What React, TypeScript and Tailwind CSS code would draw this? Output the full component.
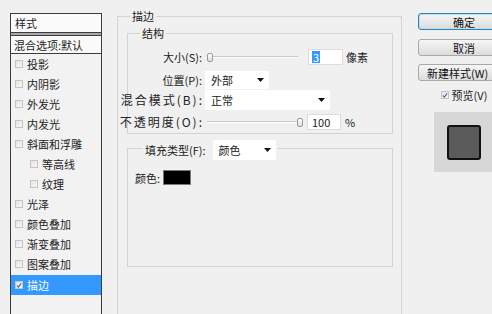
import React from "react";

const font = { fontFamily: '"Noto Sans CJK SC", "Liberation Sans", sans-serif' };

const styleItems: { label: string; indent?: boolean; checked?: boolean; active?: boolean }[] = [
  { label: "投影" },
  { label: "内阴影" },
  { label: "外发光" },
  { label: "内发光" },
  { label: "斜面和浮雕" },
  { label: "等高线", indent: true },
  { label: "纹理", indent: true },
  { label: "光泽" },
  { label: "颜色叠加" },
  { label: "渐变叠加" },
  { label: "图案叠加" },
  { label: "描边", checked: true, active: true },
];

function Check({ checked }: { checked?: boolean }) {
  return (
    <span className="flex h-[8px] w-[8px] shrink-0 items-center justify-center border border-[#c4c4c4] bg-gradient-to-br from-[#e4e4e4] to-[#f8f8f8]">
      {checked && (
        <svg width="7" height="7" viewBox="0 0 7 7">
          <path d="M1 3.5 L2.8 5.5 L6 1" fill="none" stroke="#3a5a9a" strokeWidth="1.3" />
        </svg>
      )}
    </span>
  );
}

function Caret() {
  return (
    <svg width="7" height="4" viewBox="0 0 7 4">
      <path d="M0 0 H7 L3.5 4 Z" fill="#111" />
    </svg>
  );
}

function Select({ value, w, h }: { value: string; w: string; h: string }) {
  return (
    <div className={`flex items-center justify-between bg-white pl-[6px] pr-[5px] text-[11px] text-[#222] ${w} ${h}`}>
      <span>{value}</span>
      <Caret />
    </div>
  );
}

function Slider({ w, thumbRight }: { w: string; thumbRight?: boolean }) {
  return (
    <div className={`relative flex h-[20px] items-center ${w} ${thumbRight ? "justify-end" : "justify-start"}`}>
      <div className="absolute left-0 right-0 top-[9px] h-[2px] border-t border-[#c8c8c8] bg-white" />
      <div className="relative h-[9px] w-[6px] rounded-[2px] border border-[#9a9a9a] bg-gradient-to-b from-white to-[#dcdcdc]" />
    </div>
  );
}

function Row({
  label,
  wide,
  children,
  className = "",
}: {
  label: string;
  wide?: boolean;
  children: React.ReactNode;
  className?: string;
}) {
  return (
    <div className={`flex h-[20px] items-center ${className}`}>
      <div className="flex w-[74px] shrink-0 justify-end whitespace-nowrap text-[11px] text-[#222]">
        <span className={wide ? "mr-[-2px] text-[12px] tracking-[2px]" : ""}>{label}</span>
      </div>
      {children}
    </div>
  );
}

function Button({ children, primary, left }: { children: React.ReactNode; primary?: boolean; left?: boolean }) {
  return (
    <div
      className={`flex h-[17px] w-[92px] items-center rounded-[3px] border bg-gradient-to-b from-[#f6f6f6] to-[#dcdcdc] text-[11px] text-[#111] ${
        left ? "justify-start pl-[8px]" : "justify-center"
      } ${primary ? "border-[#3c7fb1] shadow-[inset_0_0_0_1px_#aee0f6]" : "border-[#a8a8a8]"}`}
    >
      <span className="whitespace-nowrap">{children}</span>
    </div>
  );
}

export default function App() {
  return (
    <div className="flex h-[314px] w-[492px] overflow-hidden bg-[#f0f0f0] leading-[14px]" style={font}>
      {/* style list */}
      <div className="pl-[10px] pt-[13px]">
        <div className="h-[320px] w-[92px] border border-[#3c3c3c] bg-[#f2f2f2] text-[11px] text-[#222]">
          <div className="flex h-[19px] items-center border-b border-[#3c3c3c] bg-[#fafafa] pl-[4px]">样式</div>
          <div className="h-[3px] border-b border-[#3c3c3c] bg-[#a9a9a9]" />
          <div className="flex h-[18px] items-center whitespace-nowrap border-b border-[#3c3c3c] bg-[#fafafa] pl-[3px]">混合选项:默认</div>
          {styleItems.map((it) => (
            <div
              key={it.label}
              className={`flex h-[20px] items-center gap-[4px] ${it.indent ? "pl-[19px]" : "pl-[4px]"} ${
                it.active ? "my-px h-[18px] bg-[#3399ff] text-white" : ""
              }`}
            >
              <Check checked={it.checked} />
              <span>{it.label}</span>
            </div>
          ))}
        </div>
      </div>

      {/* settings */}
      <div className="ml-[15px] pt-[9px]">
        <fieldset className="h-[330px] w-[285px] border border-[#d3d3d3]">
          <legend className="ml-[12px] px-[2px] text-[11px] text-[#222]">描边</legend>
          <div className="pl-[9px] pr-[8px] pt-[3px]">
            <fieldset className="w-[266px] border border-[#d3d3d3]">
              <legend className="ml-[12px] px-[2px] text-[11px] text-[#222]">结构</legend>
              <div className="pb-[1px] pt-[7px]">
                <Row label="大小(S):">
                  <Slider w="w-[91px] ml-[5px]" />
                  <div className="ml-[10px] flex h-[16px] w-[35px] items-center border border-[#dcdcdc] bg-white pl-[3px] text-[11px]">
                    <span className="bg-[#3399ff] px-px leading-[12px] text-white">3</span>
                  </div>
                  <span className="ml-[3px] text-[11px] text-[#222]">像素</span>
                </Row>
                <Row label="位置(P):" className="mt-[3px]">
                  <div className="ml-[3px]">
                    <Select value="外部" w="w-[64px]" h="h-[18px]" />
                  </div>
                </Row>
                <Row label="混合模式(B):" wide>
                  <div className="ml-[3px]">
                    <Select value="正常" w="w-[125px]" h="h-[20px]" />
                  </div>
                </Row>
                <Row label="不透明度(O):" wide className="mt-[2px]">
                  <Slider w="w-[96px] ml-[5px]" thumbRight />
                  <div className="ml-[4px] flex h-[16px] w-[34px] items-center border border-[#dcdcdc] bg-white pl-[4px] text-[11px] text-[#222]">
                    100
                  </div>
                  <span className="ml-[4px] text-[11px] text-[#222]">%</span>
                </Row>
              </div>
            </fieldset>

            <fieldset className="mt-[8px] h-[125px] w-[266px] border border-[#d3d3d3]">
              <legend className="ml-[15px] h-[12px] px-[2px]">
                <div className="flex h-[20px] -translate-y-[2px] items-center gap-[7px] text-[11px] text-[#222]">
                  <span>填充类型(F):</span>
                  <Select value="颜色" w="w-[63px]" h="h-[20px]" />
                </div>
              </legend>
              <div className="flex items-center gap-[3px] pl-[7px] pt-[16px] text-[11px] text-[#222]">
                <span>颜色:</span>
                <div className="h-[15px] w-[28px] border border-[#7a7a7a] bg-black" />
              </div>
            </fieldset>
          </div>
        </fieldset>
      </div>

      {/* buttons */}
      <div className="ml-[16px] flex w-[92px] shrink-0 flex-col items-center pt-[13px]">
        <Button primary>确定</Button>
        <div className="mt-[9px]">
          <Button>取消</Button>
        </div>
        <div className="mt-[8px]">
          <Button left>新建样式(W)</Button>
        </div>
        <div className="mt-[7px] flex items-center gap-[3px] text-[11px] text-[#222]">
          <Check checked />
          <span>预览(V)</span>
        </div>
        <div className="mt-[10px] flex h-[60px] w-[60px] items-center justify-center bg-[#d7d7d7]">
          <div className="h-[35px] w-[34px] rounded-[3px] border-2 border-[#111] bg-[#5b5b5b]" />
        </div>
      </div>
    </div>
  );
}
